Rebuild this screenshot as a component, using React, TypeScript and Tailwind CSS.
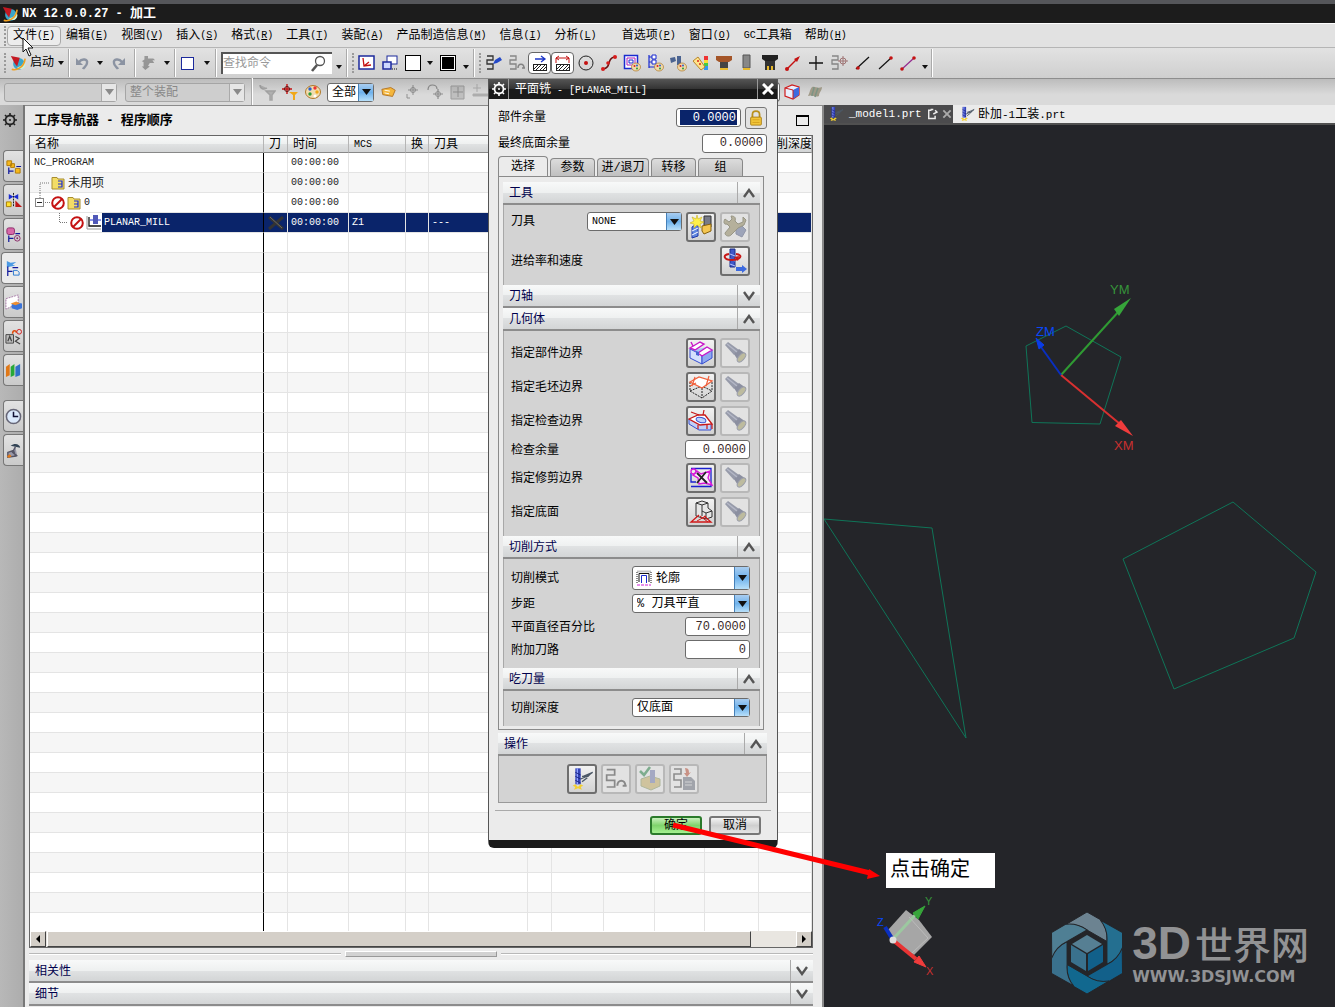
import React, { useState } from "react";

type IconProps = { children: React.ReactNode; size?: number; dim?: boolean };

const Icon = ({ children, size = 18, dim }: IconProps) => (
  <svg
    width={size}
    height={size}
    viewBox="0 0 18 18"
    fill="none"
    className={dim ? "shrink-0 opacity-40 grayscale" : "shrink-0"}
    aria-hidden="true"
  >
    {children}
  </svg>
);

const Caret = () => (
  <svg width="6" height="4" viewBox="0 0 6 4" className="shrink-0" aria-hidden="true">
    <path d="M0 0H6L3 4Z" fill="#111" />
  </svg>
);

/* ---------- shared drawings ---------- */

const NxLogo = () => (
  <Icon size={16}>
    <circle cx="10" cy="10" r="6.500" fill="#3aa6c9" />
    <path d="M8 14a5 5 0 0 0 8-7l-3 5z" fill="#c9f2e0" />
    <path d="M2 16C7 18 16 14 17 4" stroke="#f0a020" strokeWidth="1.8" />
    <path d="M1 1l10 2-3 10-3-4z" fill="#c41822" />
  </Icon>
);

const Drill = ({ size = 18, dim }: { size?: number; dim?: boolean }) => (
  <Icon size={size} dim={dim}>
    <path d="M4 1h4v12H4z" fill="#3343b8" />
    <path d="M5 1h1v12H5z" fill="#8fa0ff" />
    <path d="M4 4l4 2M4 7l4 2M4 10l4 2" stroke="#1a237e" strokeWidth=".7" />
    <path d="M2 14l2-1 2 2 2-2 2 1-2 1 1 2-3-1-3 1 1-2z" fill="#f2cf30" />
    <path d="M17 4l-7 3M17 4l-4 3M9 7h5M15 6l-7 3M13 8l-4 3" stroke="#4c5866" strokeWidth="1" />
  </Icon>
);

const ToolPath = ({ children, size }: { children?: React.ReactNode; size?: number }) => (
  <Icon size={size}>
    <path d="M2 2h6v4H2v4h6v5H2" stroke="#333" strokeWidth="1.3" />
    {children}
  </Icon>
);

const Palette = () => (
  <g>
    <ellipse cx="13" cy="13" rx="4.5" ry="4" fill="#efd9a8" stroke="#b07828" strokeWidth=".7" />
    <circle cx="11.500" cy="12" r="1" fill="#d22" />
    <circle cx="14" cy="11.500" r="1" fill="#2a5fd0" />
    <circle cx="14" cy="14.500" r="1" fill="#2b9a3a" />
  </g>
);

const Flashlight = () => (
  <svg width="26" height="26" viewBox="0 0 26 26" fill="none" className="opacity-80" aria-hidden="true">
    <path d="M3 5l3-3 11 8-5 5z" fill="#84899c" />
    <path d="M12 14l5-5 7 5-7 8z" fill="#767b90" />
    <ellipse cx="19.500" cy="17.500" rx="2.800" ry="5.500" transform="rotate(42 19.5 17.5)" fill="#b4b28e" stroke="#8b8f9c" />
    <path d="M5 4l10 8" stroke="#a9adc0" strokeWidth="1.500" />
  </svg>
);

const Folder = () => (
  <svg width="14" height="14" viewBox="0 0 14 14" fill="none" aria-hidden="true">
    <path d="M1 3V1.500h5L7 3h6v10H1z" fill="#f3dc66" stroke="#a88d2e" />
    <path d="M7 5h4v6H7M7 8h4" stroke="#1a2bd0" strokeWidth="1.200" />
  </svg>
);

const Forbid = () => (
  <svg width="14" height="14" viewBox="0 0 14 14" fill="none" aria-hidden="true">
    <circle cx="7" cy="7" r="5.800" fill="#fff" stroke="#c41212" strokeWidth="2" />
    <path d="M11 3L3 11" stroke="#c41212" strokeWidth="2" />
  </svg>
);

const Gear = ({ light }: { light?: boolean }) => (
  <svg width="14" height="14" viewBox="0 0 14 14" fill="none" aria-hidden="true">
    <circle cx="7" cy="7" r="4.500" stroke={light ? "#fff" : "#222"} strokeWidth="1.800" />
    <circle cx="7" cy="7" r="1" fill={light ? "#fff" : "#222"} />
    <path
      d="M7 0v3M7 11v3M0 7h3M11 7h3M2 2l2 2M10 10l2 2M12 2l-2 2M4 10l-2 2"
      stroke={light ? "#fff" : "#222"}
      strokeWidth="1.600"
    />
  </svg>
);

/* ---------- bars ---------- */

const menus = [
  ["文件", "F"],
  ["编辑", "E"],
  ["视图", "V"],
  ["插入", "S"],
  ["格式", "R"],
  ["工具", "T"],
  ["装配", "A"],
  ["产品制造信息", "M"],
  ["信息", "I"],
  ["分析", "L"],
  ["首选项", "P"],
  ["窗口", "O"],
];

const menuButton = "flex h-5 items-center whitespace-nowrap";

const MenuBar = () => (
  <nav className="flex h-6 items-center gap-[13px] border-t border-white bg-[#e2e2e2] pl-1">
    <Grip />
    {menus.map(([label, key], i) => (
      <button
        key={label}
        className={
          i === 0
            ? menuButton + " -ml-3 -mr-2 rounded-sm border border-[#a8a8a8] bg-[#ececec] px-[5px]"
            : i === 10
              ? menuButton + " ml-3"
              : menuButton
        }
      >
        {label}
        <span className="text-[10px]">
          (<u>{key}</u>)
        </span>
      </button>
    ))}
    <button className={menuButton}>
      <span className="text-[10px]">GC</span>工具箱
    </button>
    <button className={menuButton}>
      帮助
      <span className="text-[10px]">
        (<u>H</u>)
      </span>
    </button>
  </nav>
);

const Grip = () => <span className="h-5 w-0 shrink-0 border-l-2 border-dotted border-[#9a9a9a]" />;

const Sep = () => <span className="h-7 w-0.5 shrink-0 border-l border-[#aaa] bg-white" />;

const Tool = ({ children, label, on }: { children: React.ReactNode; label: string; on?: boolean }) => (
  <button
    aria-label={label}
    className={
      on
        ? "flex h-[22px] w-[23px] shrink-0 items-center justify-center rounded-sm border border-[#666] bg-white"
        : "flex h-[22px] w-[23px] shrink-0 items-center justify-center"
    }
  >
    {children}
  </button>
);

const Hatch = () => (
  <g stroke="#222" strokeWidth="1">
    <rect x="2.500" y="10.500" width="13" height="6" />
    <path d="M3 15l4-4M5 16l5-5M9 16l5-5M12 16l3-3" />
  </g>
);

const UndoIcon = ({ flip }: { flip?: boolean }) => (
  <svg width="14" height="14" viewBox="0 0 14 14" fill="none" className={flip ? "-scale-x-100" : ""} aria-hidden="true">
    <path d="M4 6C7 2 13 3 12 7c0 3-3 4-4 6" stroke="#8b93a2" strokeWidth="2.400" />
    <path d="M1 2v7h7z" fill="#8b93a2" />
  </svg>
);

const MainToolbar = () => (
  <div className="flex h-[31px] items-center border-t border-[#b5b5b5] bg-[linear-gradient(#e2e2e2,#cfcfcf)] pl-1">
    <Grip />
    <button className="flex w-[62px] items-center gap-1 pl-1">
      <NxLogo />
      <span>启动</span>
      <Caret />
    </button>
    <Sep />
    <Tool label="撤销"><UndoIcon /></Tool>
    <span className="flex w-[14px] justify-center"><Caret /></span>
    <Tool label="重做"><UndoIcon flip /></Tool>
    <span className="w-1" />
    <Sep />
    <Tool label="重复命令">
      <Icon dim size={16}><path d="M5 1h4v3h6l2 2h-3l2 3h-5l-2 3 2 1-5 4-4-4h2V8L2 7l3-2z" fill="#333" /></Icon>
    </Tool>
    <span className="flex w-[15px] justify-center"><Caret /></span>
    <Sep />
    <Tool label="窗口"><span className="size-[13px] border border-[#1c2a9c] bg-white" /></Tool>
    <span className="flex w-[16px] justify-center"><Caret /></span>
    <Sep />
    <label className="ml-1 flex h-[22px] w-[111px] items-center border-t-2 border-l-2 border-[#555] bg-white">
      <input aria-label="查找命令" placeholder="查找命令" className="w-[86px] min-w-0 text-[12px] outline-none placeholder:text-[#999]" />
      <Icon size={18}>
        <circle cx="11" cy="6" r="4.500" stroke="#555" strokeWidth="1.300" />
        <path d="M8 10l-5 6" stroke="#555" strokeWidth="2.600" />
      </Icon>
    </label>
    <span className="flex w-[14px] justify-center pt-2"><Caret /></span>
    <Sep />
    <span className="ml-1 flex w-[3px]"><Grip /></span>
    <Tool label="定向视图">
      <Icon>
        <rect x="1" y="2" width="15" height="13" fill="#fff" stroke="#1c2a9c" strokeWidth="1.500" />
        <path d="M5 4l1 8 7-1M6 12l5-4" stroke="#c41212" strokeWidth="1.300" />
      </Icon>
    </Tool>
    <Tool label="布局">
      <Icon>
        <rect x="6" y="2" width="10" height="8" fill="#fff" stroke="#1c2a9c" />
        <rect x="2" y="8" width="8" height="7" fill="#cdd8ff" stroke="#1c2a9c" strokeWidth="1.500" />
        <path d="M11 15h5" stroke="#111" strokeDasharray="1 1" />
      </Icon>
    </Tool>
    <Tool label="背景"><span className="size-4 border border-black bg-white" /></Tool>
    <span className="flex w-3 justify-center"><Caret /></span>
    <Tool label="颜色"><span className="size-4 border border-black bg-black outline outline-white -outline-offset-2" /></Tool>
    <span className="flex w-[14px] justify-center pt-2"><Caret /></span>
    <Sep />
    <span className="ml-1 flex w-[3px]"><Grip /></span>
    <Tool label="生成刀轨"><ToolPath><path d="M8 10l2-4 5-3 2 3-5 3z" fill="#2449c8" /></ToolPath></Tool>
    <Tool label="重播刀轨">
      <span className="opacity-50"><ToolPath><path d="M10 14c0-5 6-5 6 0M14 14h3" stroke="#333" strokeWidth="1.500" /></ToolPath></span>
    </Tool>
    <Tool label="显示选项" on><Icon><path d="M4 5h9M10 2l4 3-4 3" stroke="#1c36c8" strokeWidth="1.300" /><Hatch /></Icon></Tool>
    <Tool label="显示边界" on><Icon><path d="M2 9V4h13v5M5 2L2 4l3 2M12 2l3 2-3 2" stroke="#c41212" /><Hatch /></Icon></Tool>
    <Tool label="点"><Icon><circle cx="9" cy="9" r="7" stroke="#222" /><circle cx="9" cy="9" r="2" fill="#c41212" /></Icon></Tool>
    <Tool label="曲线">
      <Icon>
        <path d="M3 15c9-1 3-11 12-12" stroke="#6b1111" strokeWidth="1.600" />
        <circle cx="3" cy="15" r="2" fill="#d81c1c" />
        <circle cx="8" cy="9" r="1.800" fill="#d81c1c" />
        <circle cx="15" cy="3" r="2" fill="#d81c1c" />
      </Icon>
    </Tool>
    <Tool label="编辑显示"><Icon><rect x="1.500" y="1.500" width="13" height="13" fill="#fff" stroke="#1a2bd0" strokeWidth="1.500" /><path d="M4 4h8v7H4z" stroke="#b020b8" /><path d="M6 6h4v3H6z" stroke="#1a2bd0" /><Palette /></Icon></Tool>
    <Tool label="树视图"><Icon><path d="M3 1v13M3 3h6M3 8h6M3 13h6" stroke="#1a2bd0" strokeWidth="1.200" /><path d="M6 1h4v4H6zM6 6h4v4H6z" stroke="#1a2bd0" fill="#fff" /><Palette /></Icon></Tool>
    <Tool label="工具显示"><Icon><path d="M1 4l5-1 1 4-5 2zM8 2h4v9H8z" fill="#4b6390" /><Palette /></Icon></Tool>
    <Tool label="分析">
      <Icon>
        <path d="M12 2h4v4h-4z" fill="#e33" /><path d="M12 6h4v3h-4z" fill="#fd3" /><path d="M12 9h4v3h-4z" fill="#4c4" /><path d="M12 12h4v4h-4z" fill="#39e" />
        <path d="M1 7l5-4 7 10-4 3z" fill="#ffe48a" stroke="#b9862b" />
        <path d="M5 7h2M7 10h2" stroke="#d22" strokeWidth="1.400" />
      </Icon>
    </Tool>
    <Tool label="刀柄"><Icon><path d="M1 2h16v4l-3 2H4L1 6z" fill="#a45528" /><path d="M5 8h8v6H5z" fill="#444" /><path d="M5 14h8v2H5z" fill="#e8b92c" /></Icon></Tool>
    <Tool label="刀具"><Icon><path d="M5 1h7v13H5z" fill="#888" stroke="#555" /><path d="M5 14h7v2H5z" fill="#e8b92c" /></Icon></Tool>
    <Tool label="夹持器"><Icon><path d="M1 1h16v4l-3 2H4L1 5z" fill="#222" /><path d="M4 7h10v9H4z" fill="#333" /><path d="M6 12h2v4H6zM10 12h2v4h-2z" fill="#e8b92c" /></Icon></Tool>
    <Tool label="矢量"><Icon><path d="M3 15L14 4" stroke="#c41212" strokeWidth="1.500" /><path d="M16 2l-6 3 3 3z" fill="#c41212" /><circle cx="3" cy="15" r="2" fill="#c41212" /></Icon></Tool>
    <Tool label="加点"><Icon><path d="M9 2v14M2 9h14" stroke="#111" strokeWidth="1.300" /></Icon></Tool>
    <Tool label="原点"><span className="opacity-50"><ToolPath><path d="M13 2v10M8 7h10" stroke="#611" /><circle cx="13" cy="7" r="3" stroke="#611" /></ToolPath></span></Tool>
    <Tool label="端点"><Icon><path d="M3 15L16 3" stroke="#111" strokeWidth="1.200" /><circle cx="5" cy="14" r="1.800" fill="#c41212" /></Icon></Tool>
    <Tool label="直线"><Icon><path d="M3 15L15 4" stroke="#111" strokeWidth="1.200" /><circle cx="15" cy="4" r="1.800" fill="#c41212" /></Icon></Tool>
    <Tool label="两点"><Icon><path d="M3 15L15 4" stroke="#93298e" strokeWidth="1.200" /><circle cx="3" cy="15" r="1.800" fill="#c41212" /><circle cx="15" cy="4" r="1.800" fill="#c41212" /></Icon></Tool>
    <span className="flex w-3 justify-center pt-2"><Caret /></span>
    <Sep />
  </div>
);

type PickProps = { label: string; options: string[]; className: string; tall?: boolean; off?: boolean; mode?: boolean };

const Pick = ({ label, options, className, tall, off, mode }: PickProps) => (
  <span className={"relative flex shrink-0 " + className}>
    {mode && (
      <svg width="16" height="16" viewBox="0 0 16 16" fill="none" className="absolute top-1 left-1 z-10" aria-hidden="true">
        <path d="M1 13V1.500h14V13" stroke="#888" strokeWidth="2" strokeDasharray="1 1" />
        <path d="M3 12V3.500h10V12" stroke="#111" />
        <path d="M5.500 13V5.500h5V13" stroke="#1a2bd0" />
        <path d="M1 15h14" stroke="#d020d8" strokeDasharray="3 1" />
      </svg>
    )}
    <select
      aria-label={label}
      disabled={off}
      className={
        (tall ? "h-6 pl-[23px] " : "h-[19px] pl-1 ") +
        (off ? "border-[#a5a5a5] bg-[#cecece] text-[#888] " : "border-[#6b6b6b] bg-white text-black ") +
        "w-full appearance-none rounded-[3px] border pt-px pr-4 leading-4 opacity-100"
      }
    >
      {options.map((o) => (
        <option key={o}>{o}</option>
      ))}
    </select>
    <span
      className={
        off
          ? "pointer-events-none absolute inset-y-px right-px flex w-[15px] items-center justify-center border-l border-[#aaa] bg-[#e6e6e6]"
          : "pointer-events-none absolute inset-y-px right-px flex w-[15px] items-center justify-center border-l border-[#4680b8] bg-[linear-gradient(#a9cdf0,#6fb2ec_50%,#b8e0fa)]"
      }
    >
      <svg width="9" height="6" viewBox="0 0 9 6" aria-hidden="true">
        <path d="M0 0H9L4.500 6Z" fill={off ? "#8a8a8a" : "#111"} />
      </svg>
    </span>
  </span>
);

const SelectionBar = () => (
  <div className="flex h-[27px] items-center border-t border-[#8e8e8e] bg-[linear-gradient(#bcbcbc,#dadada_60%)] pl-1">
    <Pick label="类型过滤器" options={[""]} className="w-[113px]" off />
    <Pick label="选择范围" options={["整个装配"]} className="ml-2 w-[120px]" off />
    <span className="ml-[6px] flex w-[4px]"><Sep /></span>
    <Tool label="重置过滤器"><Icon dim><path d="M2 2c0 4 4 5 7 3M8 8h9l-3 4v5h-2v-5z" stroke="#555" strokeWidth="1.500" fill="#777" /></Icon></Tool>
    <Tool label="点过滤器"><Icon><path d="M6 1v10M1 6h10" stroke="#c41212" strokeWidth="1.400" /><circle cx="6" cy="6" r="2.500" stroke="#611" /><path d="M8 9h9l-3 3v5h-2v-5z" fill="#f0a818" /></Icon></Tool>
    <Tool label="颜色过滤器"><Icon><ellipse cx="9" cy="9" rx="7.500" ry="6.500" fill="#f0dcae" stroke="#b07828" /><circle cx="6" cy="6" r="1.700" fill="#2a5fd0" /><circle cx="11" cy="5" r="1.700" fill="#e33" /><circle cx="13" cy="9" r="1.700" fill="#f0a818" /><circle cx="6" cy="11" r="1.700" fill="#2b9a3a" /><circle cx="11" cy="13" r="1.500" fill="#fff" /></Icon></Tool>
    <Pick label="过滤" options={["全部"]} className="mx-[3px] w-[47px]" />
    <Tool label="标签"><Icon size={16}><path d="M1 6l10-2 5 3-3 7-11-2z" fill="#f4b63c" stroke="#b07020" /><path d="M4 7l6 1M4 10l5 1" stroke="#fff" /></Icon></Tool>
    <Tool label="捕捉"><Icon dim><path d="M10 2v10M5 7h10M4 11v4h3" stroke="#611" /><circle cx="10" cy="7" r="2.500" stroke="#611" /></Icon></Tool>
    <Tool label="旋转"><Icon dim><path d="M12 6v10M7 11h10M2 7c0-7 9-6 9-1" stroke="#411" strokeWidth="1.200" /><circle cx="12" cy="11" r="2.500" stroke="#611" /></Icon></Tool>
    <Tool label="框选"><Icon dim><path d="M2 3h13v13H2z" fill="#999" stroke="#444" /><path d="M9 4v10M4 9h10" stroke="#611" /></Icon></Tool>
    <Tool label="类选择"><Icon dim><path d="M5 1v8M1 5h8M1 11h15v2H1z" stroke="#575" fill="#575" /></Icon></Tool>
    {/* gap taken by the buttons under the dialog */}
    <span className="flex w-[288px] justify-end"><span className="h-5 w-1 rounded-r-sm border border-l-0 border-[#666] bg-white" /></span>
    <Tool label="实体"><Icon><path d="M2 5l7-3 7 2v8l-6 4-8-3z" fill="#e9eefc" stroke="#d01c1c" strokeWidth="1.200" /><path d="M10 7l6-3v8l-6 4z" fill="#3c6ae0" /><path d="M2 5l8 2v9" stroke="#d01c1c" /></Icon></Tool>
    <Tool label="片体"><Icon><path d="M2 13C4 9 4 6 6 4c4-1 5 2 10 0 0 4-3 5-3 9-4 2-6-2-11 0z" fill="#a09a88" /><path d="M8 4c0 4-2 5-2 9M12 5c-1 3-2 5-3 9" stroke="#7c9484" strokeWidth="1.500" /></Icon></Tool>
  </div>
);

/* ---------- left strip ---------- */

const resourceIcons: [string, React.ReactNode][] = [
  ["装配导航器", <g key="a"><path d="M2 3h5v5H2zM6 6h4v4H6zM11 11h5v5h-5z" fill="#f6b81c" stroke="#b07a08" /><path d="M4 10v7M4 14h5M12 9h5" stroke="#10189c" strokeWidth="1.300" /></g>],
  ["约束导航器", <g key="b"><path d="M4 2v6l5-3 5 3V2L9 5z" fill="#1a2bd0" /><path d="M9 1v15" stroke="#111" strokeDasharray="2 1" /><path d="M1.500 10.500h5v5h-5z" fill="#ffe02c" stroke="#a67a00" /><path d="M11 9v7h7z" fill="#c01818" /></g>],
  ["部件导航器", <g key="c"><rect x="2" y="2" width="8" height="7" rx="2" fill="#d868a8" stroke="#8a2868" /><path d="M4 10v7M4 13h5M11 8h5" stroke="#10189c" strokeWidth="1.300" /><circle cx="13" cy="13" r="3" stroke="#8a2868" /><circle cx="13" cy="13" r="1" fill="#8a2868" /></g>],
  ["工序导航器", <g key="d"><path d="M3 1l4 2 6-1-4 3 3 1-5 1-4 1z" fill="#4b9ae4" /><path d="M4 7v10M4 12h5M9 8h6" stroke="#10189c" strokeWidth="1.300" /><path d="M10 11h4l2 2v3h-6z" stroke="#2878d0" /></g>],
  ["机床导航器", <g key="e"><path d="M1 5l13-4v9L1 16z" fill="#fff" stroke="#a878a8" strokeDasharray="2 1" /><path d="M7 11l5-2 6 1v5l-5 2-6-2z" fill="#3c74d8" /><path d="M6 10l6-2 4 2-5 2z" fill="#f09030" /></g>],
  ["重用库", <g key="f"><path d="M1 7h8v9H1z" fill="#bbb" stroke="#444" /><path d="M3 14l2-5 2 5M11 9l4 2-4 3 5 3" stroke="#444" strokeWidth="1.300" /><path d="M8 6c0-4 4-4 4-1" stroke="#e05010" strokeWidth="1.600" /><circle cx="15" cy="4" r="2.500" stroke="#d01c1c" /></g>],
  ["HD3D", <g key="g"><path d="M1 5l4-3v12l-4 2z" fill="#e07818" /><path d="M6 5l4-3v12l-4 2z" fill="#28a838" /><path d="M11 5l5-3v12l-5 2z" fill="#3070c8" /></g>],
  ["历史记录", <g key="h"><circle cx="9" cy="9" r="7.500" fill="#dbe9fb" stroke="#667" strokeWidth="1.600" /><path d="M9 4v5h5" stroke="#113" strokeWidth="1.600" /></g>],
  ["角色", <g key="i"><path d="M6 4c5-4 10-1 10 2l-5-1z" fill="#345" /><path d="M11 5l-3 6 5 4M3 11l6-2 2 6-8 1z" stroke="#556" strokeWidth="1.500" fill="#99a" /><path d="M2 15l3-2 2 2-3 2z" fill="#e07818" /></g>],
];

const ResourceBar = () => (
  <aside className="flex w-[25px] shrink-0 flex-col items-end gap-0.5 border-r-2 border-[#777] bg-[linear-gradient(90deg,#b8b8b8,#adadad)]">
    <button aria-label="设置" className="mb-[21px] flex h-[22px] w-full items-end justify-start pl-[3px]">
      <Gear />
    </button>
    {resourceIcons.map(([label, art], i) => (
      <button
        key={label}
        aria-label={label}
        className={
          (i === 7 ? "mt-3 " : "") +
          (i === 3 ? "w-[22px] border-[#777] bg-[#ebebeb] " : "w-5 border-[#777] bg-[linear-gradient(#e2e2e2,#cacaca)] ") +
          "flex h-8 items-center justify-center rounded-l-sm border border-r-0"
        }
      >
        <Icon size={17}>{art}</Icon>
      </button>
    ))}
  </aside>
);

/* ---------- operation navigator ---------- */

const Chevron = ({ down }: { down?: boolean }) => (
  <svg width="12" height="10" viewBox="0 0 12 10" fill="none" aria-hidden="true">
    <path d={down ? "M1 1l5 7 5-7" : "M1 9l5-7 5 7"} stroke="#555" strokeWidth="2.400" />
  </svg>
);

const shade = "bg-[linear-gradient(#f8f9f9,#eef0f0_50%,#e0e2e3_50%,#d3d5d6)]";

const SectionHead = ({ title, closed }: { title: string; closed?: boolean }) => (
  <button className={"flex h-[23px] w-full items-center border-b-2 border-[#8c8c8c] pl-[6px] text-left text-[#00004c] " + shade}>
    <span className="flex-1 pt-0.5">{title}</span>
    <span className="flex h-full w-[23px] items-center justify-center border-l border-[#aaa]">
      <Chevron down={closed} />
    </span>
  </button>
);

const rows = [
  { time: "00:00:00", cell: <span className="pl-1 text-[10px]">NC_PROGRAM</span> },
  {
    time: "00:00:00",
    cell: (
      <>
        <svg width="21" height="20" viewBox="0 0 21 20" fill="none" aria-hidden="true">
          <path d="M10 20V10H20" stroke="#777" strokeDasharray="1 1" />
        </svg>
        <Folder />
        <span className="pt-0.5 pl-[3px]">未用项</span>
      </>
    ),
  },
  {
    time: "00:00:00",
    cell: (
      <>
        <svg width="21" height="20" viewBox="0 0 21 20" fill="none" aria-hidden="true">
          <path d="M10 0V5M15 9.500h5" stroke="#777" strokeDasharray="1 1" />
          <rect x="5.500" y="5.500" width="8" height="8" fill="#fff" stroke="#888" />
          <path d="M7 9.500h5" stroke="#222" />
        </svg>
        <Forbid />
        <span className="w-0.5" />
        <Folder />
        <span className="pl-[3px] text-[10px]">0</span>
      </>
    ),
  },
];

const line = "border-b border-r border-[#e4e4e4] p-0 ";

const Navigator = () => (
  <main className="flex w-[799px] shrink-0 flex-col border-t border-r-2 border-[#8a8a8a] bg-[#ebebeb] pr-[9px] pl-1">
    <header className="flex h-[29px] items-center justify-between pr-1 pl-[5px]">
      <h1 className="text-[13px] font-bold">
        工序导航器<span className="text-[12px]"> - </span>程序顺序
      </h1>
      <button aria-label="最大化" className="h-[11px] w-[13px] border border-t-2 border-black" />
    </header>
    <section className="flex min-h-0 flex-1 flex-col border border-[#666] bg-white">
      <div className="min-h-0 flex-1 overflow-hidden">
        <table className="w-full table-fixed border-separate border-spacing-0">
          <colgroup>
            <col className="w-[234px]" />
            <col className="w-[24px]" />
            <col className="w-[61px]" />
            <col className="w-[57px]" />
            <col className="w-[23px]" />
            <col className="w-[99px]" />
            <col className="w-[24px]" />
            <col className="w-[52px]" />
            <col className="w-[51px]" />
            <col className="w-[50px]" />
            <col className="w-[54px]" />
            <col />
          </colgroup>
          <thead>
            <tr>
              {["名称", "刀", "时间", "MCS", "换", "刀具", "", "", "", "", "", "切削深度"].map((h, i) => (
                <th
                  key={i}
                  className={
                    "h-[17px] overflow-hidden border-r border-b border-r-[#b5b5b5] border-b-[#888] pt-0.5 pr-0 pb-0 pl-[5px] text-left leading-[14px] font-normal whitespace-nowrap " +
                    (h === "MCS" ? "text-[10px] " : "") +
                    shade
                  }
                >
                  {h}
                </th>
              ))}
            </tr>
          </thead>
          <tbody className="text-[#222]">
            {rows.map((r, i) => (
              <tr key={i} className="even:bg-[#f6f6f6]">
                <td className={line + "border-r-black"}>
                  <div className="flex h-[19px] items-center">{r.cell}</div>
                </td>
                <td className={line} />
                <td className={line + "pl-[3px] text-[10px] leading-none"}>{r.time}</td>
                {Array.from({ length: 9 }, (_, c) => (
                  <td key={c} className={line} />
                ))}
              </tr>
            ))}
            <tr className="bg-[#0a246a] text-[10px] leading-none text-white">
              <td className={line + "border-r-black"}>
                <div className="flex h-[19px] items-center">
                  <span className="flex h-full items-center gap-0.5 bg-white pr-px">
                    <svg width="38" height="19" viewBox="0 0 38 19" fill="none" aria-hidden="true">
                      <path d="M29.500 0v9.500H38" stroke="#777" strokeDasharray="1 1" />
                    </svg>
                    <Forbid />
                    <svg width="15" height="15" viewBox="0 0 15 15" fill="none" aria-hidden="true">
                      <path d="M1 1v13h14" stroke="#999" />
                      <path d="M3 2v9h12" stroke="#111" strokeWidth="1.300" />
                      <path d="M7 0h5v9H7z" fill="#5058b8" />
                      <path d="M4 5h3M12 5h3" stroke="#1a2bd0" />
                    </svg>
                  </span>
                  <span className="pl-0.5">PLANAR_MILL</span>
                </div>
              </td>
              <td className={line}>
                <svg width="16" height="14" viewBox="0 0 16 14" className="mx-auto" aria-hidden="true">
                  <path d="M1 1l14 12M15 1L1 13" stroke="#333" strokeWidth="3" />
                  <path d="M2 1l12 11" stroke="#777" strokeWidth=".800" />
                </svg>
              </td>
              <td className={line + "pl-[3px]"}>00:00:00</td>
              <td className={line + "pl-[3px]"}>Z1</td>
              <td className={line} />
              <td className={line + "pl-[3px]"}>---</td>
              {Array.from({ length: 6 }, (_, c) => (
                <td key={c} className={line} />
              ))}
            </tr>
            {Array.from({ length: 60 }, (_, r) => (
              <tr key={r} className="even:bg-[#f6f6f6]">
                {Array.from({ length: 12 }, (_, c) => (
                  <td key={c} className={c === 0 ? line + "h-5 border-r-black" : line} />
                ))}
              </tr>
            ))}
          </tbody>
        </table>
      </div>
      <div className="flex h-4 shrink-0 bg-[#e9e6e1]">
        <button aria-label="向左" className="flex w-4 items-center justify-center border border-t-white border-r-[#444] border-b-[#444] border-l-white bg-[#d4cfc8]">
          <svg width="4" height="8" viewBox="0 0 4 8" aria-hidden="true"><path d="M4 0v8L0 4z" /></svg>
        </button>
        <span className="ml-px flex-1 border border-t-white border-r-[#444] border-b-[#444] border-l-white bg-[#d4cfc8]" />
        <span className="w-[45px]" />
        <button aria-label="向右" className="flex w-4 items-center justify-center border border-t-white border-r-[#444] border-b-[#444] border-l-white bg-[#d4cfc8]">
          <svg width="4" height="8" viewBox="0 0 4 8" aria-hidden="true"><path d="M0 0v8l4-4z" /></svg>
        </button>
      </div>
    </section>
    <div className="flex h-3 items-center gap-1">
      <span className="h-0.5 w-[312px] border-t border-[#b8b8b8] bg-white" />
      <span className="h-[6px] w-[152px] border border-t-white border-r-[#999] border-b-[#999] border-l-white bg-[#d2d2d2]" />
      <span className="h-0.5 flex-1 border-t border-[#b8b8b8] bg-white" />
    </div>
    <SectionHead title="相关性" closed />
    <SectionHead title="细节" closed />
    <span className="h-px" />
  </main>
);

/* ---------- dialog ---------- */

const ToolButton = ({ label, off, children }: { label: string; off?: boolean; children: React.ReactNode }) => (
  <button
    aria-label={label}
    disabled={off}
    className={
      off
        ? "flex size-[30px] shrink-0 items-center justify-center rounded-[3px] border-2 border-[#b8b8b8] bg-[#e2e2e2]"
        : "flex size-[30px] shrink-0 items-center justify-center rounded-[3px] border-2 border-[#6e6e6e] bg-[linear-gradient(#f2f2f2,#d2d2d2)]"
    }
  >
    {children}
  </button>
);

const NumberBox = ({ id, value }: { id: string; value: string }) => (
  <input
    id={id}
    defaultValue={value}
    className="h-[19px] w-[65px] shrink-0 rounded-[3px] border border-[#6b6b6b] bg-white pr-[3px] text-right text-[#3a2a2a]"
  />
);

const geometry = [
  {
    label: "指定部件边界",
    art: (
      <>
        <path d="M2 9v9l12 6 10-6v-8l-5-3-9 2z" fill="#a8c4f4" />
        <path d="M2 9l12 6v9L2 18z" fill="#d4e0fc" stroke="#3850d0" />
        <path d="M14 15l10-5v8l-10 6z" fill="#8ea8f0" stroke="#3850d0" />
        <path d="M2 8l10-6 4 2-9 6zM10 13l9-6 5 3-10 6zM3 2l2 4" fill="#fff" stroke="#c818c8" strokeWidth="1.400" />
        <path d="M8 11v4l3 1v-4" fill="#4860d0" />
      </>
    ),
  },
  {
    label: "指定毛坯边界",
    art: (
      <>
        <path d="M2 8v9l12 7 10-7V8M14 14v10M2 17l12-5 10 5" stroke="#222" strokeDasharray="2 1" />
        <path d="M2 8l9-5 13 4-10 7z" fill="#fff" stroke="#f0603c" strokeWidth="1.300" />
        <path d="M7 3l-3 9M21 2l-3 10M2 12l6-3" stroke="#f0603c" strokeWidth="1.200" />
      </>
    ),
  },
  {
    label: "指定检查边界",
    art: (
      <>
        <path d="M1 11v5l10 6h12v-6" fill="#c0d0f8" stroke="#3850d0" />
        <path d="M1 11l9-4h7l7 9-12 1z" fill="#fff" stroke="#c81818" strokeWidth="1.300" />
        <ellipse cx="13" cy="12" rx="5" ry="2.500" transform="rotate(15 13 12)" fill="#c0d0f8" stroke="#3850d0" />
        <path d="M3 4l8 3M16 2l-1 5M10 17v4M19 17v4M24 16v5" stroke="#c81818" strokeWidth="1.200" />
      </>
    ),
  },
  {
    label: "指定修剪边界",
    art: (
      <>
        <path d="M3 3.500h20v18H3M3 8v9h5" stroke="#1a20d0" strokeWidth="1.300" />
        <path d="M9 6l4 3 9-3-2 7 4 7-7-2-6 1-1-6-5-3z" stroke="#d818d8" strokeWidth="1.400" fill="#fbeafb" />
        <circle cx="5.500" cy="6.500" r="2.500" stroke="#d818d8" strokeWidth="1.300" />
        <path d="M9 8l10 10M18 7l-9 11" stroke="#222" strokeWidth="1.800" />
      </>
    ),
  },
  {
    label: "指定底面",
    art: (
      <>
        <path d="M8 4l6-2 6 2v5l4 3v6l-6 2-10-3z" fill="#e6e6e6" stroke="#333" />
        <path d="M8 4l6 2v11M14 6l6-2M14 12l4 2 6-2M18 14v6" stroke="#333" />
        <path d="M11 16l-8 7h20l-7-6" stroke="#d01818" strokeWidth="1.300" />
        <path d="M9 22l9-5M12 17l8 6" stroke="#d01818" />
      </>
    ),
  },
];

const GeometryRow = ({ index }: { index: number }) => (
  <div className="flex items-center gap-1">
    <span className="flex-1 pt-0.5">{geometry[index].label}</span>
    <ToolButton label={geometry[index].label}>
      <svg width="26" height="26" viewBox="0 0 26 26" fill="none" aria-hidden="true">{geometry[index].art}</svg>
    </ToolButton>
    <ToolButton label="显示" off><Flashlight /></ToolButton>
  </div>
);

const Body = ({ children }: { children: React.ReactNode }) => (
  <div className="flex flex-col gap-1 border-x border-[#a8a8a8] bg-[#d3d3d3] pt-[7px] pr-[9px] pb-[9px] pl-[7px]">{children}</div>
);

const tabs = ["选择", "参数", "进/退刀", "转移", "组"];

const MillDialog = () => {
  const [active, setActive] = useState(0);
  const [stock, setStock] = useState("0.0000");

  return (
    <div role="dialog" aria-label="平面铣" className="absolute top-[79px] left-[488px] w-[290px] rounded-b-md border-x border-b-8 border-x-[#555] border-b-[#1b1b1b] bg-[#ebebeb]">
      <header className="flex h-5 items-center bg-[linear-gradient(#555,#333_50%,#1a1a1a_50%)] text-white">
        <button aria-label="选项" className="flex h-full w-5 items-center justify-center border-r border-[#999]"><Gear light /></button>
        <h2 className="flex-1 pt-0.5 pl-[6px] whitespace-nowrap">
          平面铣<span className="text-[10px]"> - [PLANAR_MILL]</span>
        </h2>
        <button aria-label="关闭" className="flex h-full w-5 items-center justify-center border-l border-[#999]">
          <svg width="12" height="12" viewBox="0 0 12 12" aria-hidden="true"><path d="M1 1l10 10M11 1L1 11" stroke="#fff" strokeWidth="3" /></svg>
        </button>
      </header>

      <div className="pr-[10px] pl-[9px]">
        <div className="flex h-[33px] items-center gap-1 pt-1">
          <label htmlFor="stock" className="flex-1">部件余量</label>
          <span className="flex h-[19px] w-[65px] items-center rounded-[3px] border border-[#6b6b6b] bg-white px-[3px]">
            <input
              id="stock"
              value={stock}
              onChange={(e) => setStock(e.target.value)}
              className="h-[15px] w-full min-w-0 bg-[#0a246a] pr-px text-right text-white outline-none"
            />
          </span>
          <button aria-label="锁定" className="flex h-[22px] w-[22px] items-center justify-center rounded-[3px] border border-[#777] bg-[#e2e2e2]">
            <Icon size={16}>
              <path d="M5 9V5c0-5 8-5 8 0v4" stroke="#b8901c" strokeWidth="2" />
              <rect x="3" y="8" width="12" height="9" rx="1" fill="#f2c63a" stroke="#a87c10" />
              <path d="M5 11h8M5 14h8" stroke="#d39d1c" />
            </Icon>
          </button>
        </div>
        <div className="flex h-[22px] items-center">
          <label htmlFor="floor" className="flex-1 pt-0.5">最终底面余量</label>
          <NumberBox id="floor" value="0.0000" />
        </div>

        <div role="tablist" className="mt-0.5 flex h-5 items-end gap-0.5">
          {tabs.map((t, i) => (
            <button
              key={t}
              role="tab"
              aria-selected={active === i}
              onClick={() => setActive(i)}
              className={
                (active === i ? "h-5 bg-[#ebebeb] " : "h-[18px] bg-[linear-gradient(#dcdcdc,#c0c0c0)] ") +
                (i === 0 ? "w-[50px] " : i === 2 ? "w-[52px] " : "w-[45px] ") +
                "flex shrink-0 items-center justify-center rounded-t-[4px] border border-b-0 border-[#888] whitespace-nowrap"
              }
            >
              {t}
            </button>
          ))}
        </div>

        <div className="mr-[3px] border border-[#8a8a8a] pt-[5px] pr-[3px] pb-[3px] pl-1">
          <SectionHead title="工具" />
          <Body>
            <div className="flex items-start gap-1">
              <span className="flex h-5 flex-1 items-center">刀具</span>
              <Pick label="刀具" options={["NONE"]} className="w-[95px] text-[10px]" />
              <ToolButton label="新建刀具">
                <svg width="26" height="26" viewBox="0 0 26 26" fill="none" aria-hidden="true">
                  <path d="M4 13l6-4v13l-6 2z" fill="#5f86e0" stroke="#2038a8" />
                  <path d="M4 17l6-3M4 21l6-3" stroke="#fff" />
                  <path d="M16 2h7v11h-7z" fill="#777b88" stroke="#333" />
                  <path d="M14 12l9-2v7l-7 3-2-3z" fill="#f4c650" stroke="#86600c" />
                  <path d="M9 1l1 4 4-2-2 4 4 1-4 2 1 4-4-3-3 3 0-4-4-1 4-2-2-4 4 2z" fill="#fff04a" stroke="#c8b020" strokeWidth=".600" />
                </svg>
              </ToolButton>
              <ToolButton label="编辑刀具" off>
                <svg width="26" height="26" viewBox="0 0 26 26" fill="none" className="opacity-80" aria-hidden="true">
                  <path d="M14 13l5-2 5 5-4 7-6-3z" fill="#8d95b0" stroke="#7c8298" />
                  <path d="M3 5l4 3 3-3-1-3c4 0 5 2 4 5l3 3 5-2 0-5 3 3-2 5-6 3-7 7c-2 2-6 1-6-2l5-6-3-3c-3 1-4-2-2-5z" fill="#aaa48a" stroke="#85836f" />
                </svg>
              </ToolButton>
            </div>
            <div className="flex items-center">
              <span className="flex-1 pt-0.5">进给率和速度</span>
              <ToolButton label="进给率和速度">
                <svg width="26" height="26" viewBox="0 0 26 26" fill="none" aria-hidden="true">
                  <path d="M8 1h5v18H8z" fill="#4058c8" stroke="#1c2c88" />
                  <path d="M8 6l5 2M8 11l5 2M8 16l5 2" stroke="#b8c4ff" />
                  <path d="M14 6c8 1 4 6-4 6S0 7 7 6" stroke="#c81818" strokeWidth="2" />
                  <path d="M12 9l5-1-1 5z" fill="#c81818" />
                  <path d="M14 19h6v-2l5 4-5 4v-2h-6z" fill="#3c6ae0" />
                </svg>
              </ToolButton>
            </div>
          </Body>
          <SectionHead title="刀轴" closed />
          <SectionHead title="几何体" />
          <Body>
            <GeometryRow index={0} />
            <GeometryRow index={1} />
            <GeometryRow index={2} />
            <div className="flex items-center">
              <label htmlFor="check" className="flex-1 pt-0.5">检查余量</label>
              <NumberBox id="check" value="0.0000" />
            </div>
            <GeometryRow index={3} />
            <GeometryRow index={4} />
          </Body>
          <SectionHead title="切削方式" />
          <Body>
            <div className="flex items-center">
              <span className="flex-1 pt-0.5">切削模式</span>
              <Pick label="切削模式" options={["轮廓"]} className="w-[118px]" tall mode />
            </div>
            <div className="flex items-center">
              <span className="flex-1 pt-0.5">步距</span>
              <Pick label="步距" options={["% 刀具平直"]} className="w-[118px]" />
            </div>
            <div className="flex items-center">
              <label htmlFor="percent" className="flex-1 pt-0.5">平面直径百分比</label>
              <NumberBox id="percent" value="70.0000" />
            </div>
            <div className="flex items-center">
              <label htmlFor="passes" className="flex-1 pt-0.5">附加刀路</label>
              <NumberBox id="passes" value="0" />
            </div>
          </Body>
          <SectionHead title="吃刀量" />
          <Body>
            <div className="flex items-center">
              <span className="flex-1 pt-0.5">切削深度</span>
              <Pick label="切削深度" options={["仅底面"]} className="w-[118px]" />
            </div>
          </Body>
        </div>

        <div className="mt-[3px]">
          <SectionHead title="操作" />
          <div className="flex h-[47px] items-center justify-center gap-1 border border-t-0 border-[#999] bg-[#d3d3d3]">
            <ToolButton label="生成"><Drill size={24} /></ToolButton>
            <ToolButton label="重播" off>
              <span className="opacity-50"><ToolPath size={24}><path d="M10 14c0-5 6-5 6 0M14 14h3" stroke="#333" strokeWidth="1.500" /></ToolPath></span>
            </ToolButton>
            <ToolButton label="确认" off>
              <svg width="26" height="26" viewBox="0 0 26 26" fill="none" className="opacity-60" aria-hidden="true">
                <path d="M4 13l9-3 10 3v7l-9 4-10-4z" fill="#c4b070" stroke="#8d9a6c" />
                <path d="M13 4h5v13h-5z" fill="#7c84b0" />
                <path d="M3 5l4 4 6-8" stroke="#3d8b58" strokeWidth="2.600" />
              </svg>
            </ToolButton>
            <ToolButton label="列表" off>
              <svg width="26" height="26" viewBox="0 0 26 26" fill="none" className="opacity-60" aria-hidden="true">
                <path d="M3 3h7v5H3v6h7v7H3" stroke="#555" strokeWidth="1.600" />
                <path d="M12 11h8l4 4v9H12z" fill="#777b88" />
                <path d="M14 16h7M14 19h7" stroke="#ccc" />
                <path d="M14 2c4 0 4 3 4 5l2-1-4 5-3-4h2z" fill="#b85c48" />
              </svg>
            </ToolButton>
          </div>
        </div>
      </div>

      <footer className="mx-[6px] mt-[7px] flex justify-end gap-[7px] border-t border-[#aaa] pt-[5px] pr-[10px] pb-[5px]">
        <button className="h-[19px] w-[52px] rounded-[3px] border-2 border-[#2b7a2b] bg-[linear-gradient(#c8f0bc,#7fd46c_50%,#a4f090)] pt-px leading-none">确定</button>
        <button className="h-[19px] w-[52px] rounded-[3px] border-2 border-[#777] bg-[linear-gradient(#f4f4f4,#cfcfcf_50%,#e4e4e4)] pt-px leading-none">取消</button>
      </footer>
    </div>
  );
};

/* ---------- graphics window ---------- */

const bladeFills = ["#6c8391", "#246f90", "#12608a", "#11688f", "#3a718d", "#4f7f94"];

const Watermark = () => (
  <div className="absolute right-[26px] bottom-[13px] flex items-center gap-[9px] text-[#919294]">
    <svg width="72" height="82" viewBox="0 0 72 82" fill="none" aria-hidden="true">
      {bladeFills.map((fill, i) => (
        <path
          key={fill}
          d="M14 13L36 0L50 8Q57 17 56 29.500L36 18Q26 11 14 13Z"
          transform={`rotate(${i * 60} 36 41)`}
          fill={fill}
          stroke="#242529"
        />
      ))}
      <path d="M36 23l15 9-15 9-15-9z" fill="#567f93" />
      <path d="M20 33l15 9v17l-15-9z" fill="#3a718d" />
      <path d="M52 33l-15 9v17l15-9z" fill="#11608a" />
    </svg>
    <div className="flex flex-col">
      <span className="flex items-center gap-1 leading-[48px] font-medium">
        <span className="text-[46px] font-bold [font-family:'Liberation_Sans',sans-serif]">3D</span>
        <span className="text-[38px] [font-family:'Noto_Sans_CJK_SC',sans-serif]">世界网</span>
      </span>
      <span className="text-[16px] leading-5 font-bold [font-family:'DejaVu_Sans',sans-serif]">WWW.3DSJW.COM</span>
    </div>
  </div>
);

const Graphics = () => (
  <section className="flex min-w-0 flex-1 flex-col">
    <div className="flex h-5 shrink-0 border-b-2 border-[#505050] bg-[#ebebeb]">
      <button className="flex w-[129px] items-center bg-[#4b4b4d] pl-1 text-white">
        <Drill size={16} />
        <span className="pl-[5px] text-[11px]">_model1.prt</span>
        <svg width="30" height="12" viewBox="0 0 30 12" fill="none" className="ml-1" aria-hidden="true">
          <path d="M6 2H3v9h7V8M5 1h3M8 6l4-2-2-2" stroke="#eee" strokeWidth="1.600" />
          <path d="M19 2l8 8M27 2l-8 8" stroke="#aaa" strokeWidth="2" />
        </svg>
      </button>
      <button className="flex items-center pl-[6px]">
        <Drill size={16} />
        <span className="pt-0.5 pl-[3px] whitespace-nowrap">卧加<span className="text-[11px]">-1</span>工装<span className="text-[11px]">.prt</span></span>
      </button>
    </div>
    <div className="relative min-h-0 flex-1 overflow-hidden bg-[#242529]">
      <svg
        width="511"
        height="882"
        viewBox="824 125 511 882"
        fill="none"
        className="absolute top-0 left-0 [font-family:'Liberation_Sans',sans-serif]"
        role="img"
        aria-label="图形窗口"
      >
        <g stroke="#0f7558">
          <path d="M1026 346L1066 326L1121 357L1100 424L1032 422.500Z" />
          <path d="M824 519L932 528L966 738Z" />
          <path d="M1123 559L1233 502L1316 572L1294 638L1174 689Z" />
        </g>
        <path d="M1061 375L1120 310" stroke="#2f9a33" strokeWidth="2" />
        <path d="M1131 298L1114 309L1119 316Z" fill="#36a53a" />
        <path d="M1061 375L1120 424" stroke="#d83030" strokeWidth="2" />
        <path d="M1133 436L1115 426L1121 420Z" fill="#f03c3c" />
        <path d="M1061 375L1041 347" stroke="#0a2fc0" strokeWidth="2" />
        <path d="M1036 338L1044 345L1039 349Z" fill="#0a3ce8" stroke="#0a3ce8" />
        <text x="1110" y="294" fontSize="13" fill="#36943a">YM</text>
        <text x="1036" y="336" fontSize="13" fill="#0a48f8">ZM</text>
        <text x="1114" y="450" fontSize="13" fill="#c83030">XM</text>

        <path d="M906 910L919 920L932 937L914 955L892 940L888 930Z" fill="#a6a6a6" />
        <path d="M893 939L918 912" stroke="#9cc8a0" strokeWidth="3" />
        <path d="M925 906L913 913L918 919Z" fill="#36a53a" stroke="#36a53a" />
        <path d="M909 917L928 938L912 953" stroke="#bbb" />
        <path d="M894 941L916 959" stroke="#e83434" strokeWidth="4" />
        <path d="M926 967L914 962L919 956Z" fill="#f03c3c" stroke="#f03c3c" />
        <path d="M893 940L885 927" stroke="#0a2fc0" strokeWidth="4" />
        <circle cx="893" cy="940" r="3.500" fill="#ddd" />
        <text x="925" y="905" fontSize="11" fill="#36943a">Y</text>
        <text x="877" y="926" fontSize="11" fill="#0a48f8">Z</text>
        <text x="926" y="975" fontSize="11" fill="#c83030">X</text>
      </svg>
      <Watermark />
    </div>
  </section>
);

export default function App() {
  return (
    <div className="relative flex h-screen min-h-[900px] w-full flex-col overflow-hidden bg-[#d8d8d8] text-[12px] leading-4 text-black [font-family:'Liberation_Mono','Noto_Sans_CJK_SC',monospace]">
      <header className="flex h-[23px] shrink-0 items-center gap-1 border-t-4 border-[#55565a] bg-[#1c1c1c] pl-0.5 font-bold text-white">
        <NxLogo />
        <span className="whitespace-pre">NX 12.0.0.27 - <span className="text-[13px]">加工</span></span>
      </header>
      <MenuBar />
      <MainToolbar />
      <SelectionBar />
      <div className="flex min-h-0 flex-1">
        <ResourceBar />
        <Navigator />
        <Graphics />
      </div>

      <MillDialog />

      <div className="absolute top-[853px] left-[886px] flex h-[35px] w-[109px] items-center bg-white pl-1 text-[20px]">点击确定</div>
      <svg width="220" height="64" viewBox="668 820 220 64" className="pointer-events-none absolute top-[820px] left-[668px]" aria-hidden="true">
        <path d="M673 825L870 873" stroke="#f00" strokeWidth="5" />
        <path d="M880 876L867 879L869 869Z" fill="#f00" />
      </svg>
      <svg width="14" height="20" viewBox="0 0 14 20" className="pointer-events-none absolute top-[37px] left-[22px]" aria-hidden="true">
        <path d="M1 1V15L4 12L7 19L9 18L6 11H11Z" fill="#fff" stroke="#111" />
      </svg>
    </div>
  );
}
